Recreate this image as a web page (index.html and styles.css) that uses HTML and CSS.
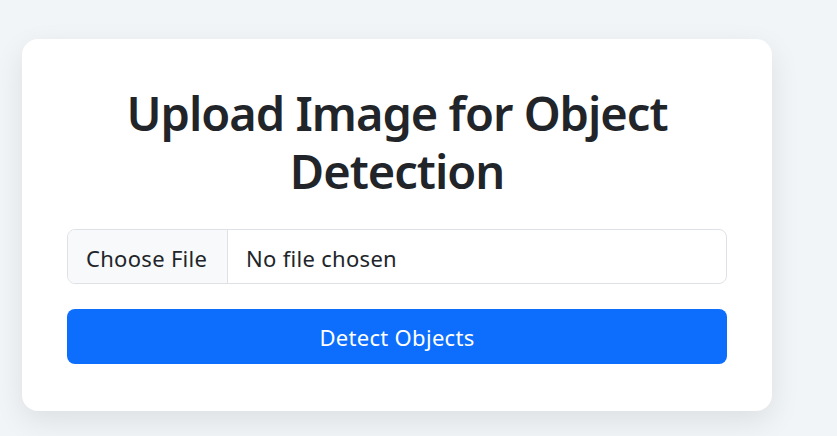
FILE: index.html
```html
<!DOCTYPE html>
<html lang="en">
<head>
<meta charset="utf-8">
<title>Upload Image for Object Detection</title>
<link rel="stylesheet" href="styles.css">
</head>
<body>
<main class="page">
  <section class="card">
    <h1 class="title">Upload Image for Object Detection</h1>
    <form class="upload-form">
      <label class="file-field">
        <input class="file-input" type="file" accept="image/*">
        <span class="file-button">Choose File</span>
        <span class="file-name">No file chosen</span>
      </label>
      <button class="detect-btn" type="submit">Detect Objects</button>
    </form>
  </section>
</main>
</body>
</html>
```

FILE: styles.css
```css
* { box-sizing: border-box; }

html, body {
  margin: 0;
  padding: 0;
}

body {
  background: #f2f5f8;
  font-family: "Noto Sans", "Open Sans", sans-serif;
  color: #212529;
  height: 436px;
  overflow: hidden;
}

.page {
  padding: 39px 0 0 22px;
}

.card {
  width: 750px;
  background: #ffffff;
  border-radius: 16px;
  box-shadow: 0 10px 30px rgba(0, 0, 0, 0.09);
  padding: 45px 45px 47px;
}

.title {
  margin: 0 0 29px;
  text-align: center;
  font-size: 47px;
  font-weight: 600;
  line-height: 58px;
  letter-spacing: -1px;
  color: #212529;
}

.upload-form {
  display: flex;
  flex-direction: column;
  gap: 25px;
}

.file-field {
  display: flex;
  align-items: stretch;
  height: 55px;
  border: 1px solid #dee2e6;
  border-radius: 8px;
  overflow: hidden;
  background: #ffffff;
  font-size: 22px;
  cursor: pointer;
}

.file-input {
  position: absolute;
  width: 1px;
  height: 1px;
  opacity: 0;
  overflow: hidden;
}

.file-button {
  display: flex;
  align-items: center;
  padding: 2px 18px 0;
  width: 160px;
  background: #f8f9fa;
  border-right: 1px solid #dee2e6;
  color: #212529;
  letter-spacing: 0.3px;
}

.file-name {
  display: flex;
  align-items: center;
  padding: 2px 0 0 18px;
  color: #212529;
  letter-spacing: 0.3px;
}

.detect-btn {
  height: 55px;
  padding-top: 2px;
  border: none;
  border-radius: 8px;
  background: #0d6efd;
  color: #ffffff;
  font-family: inherit;
  font-size: 22px;
  letter-spacing: 0.3px;
  cursor: pointer;
}
```
